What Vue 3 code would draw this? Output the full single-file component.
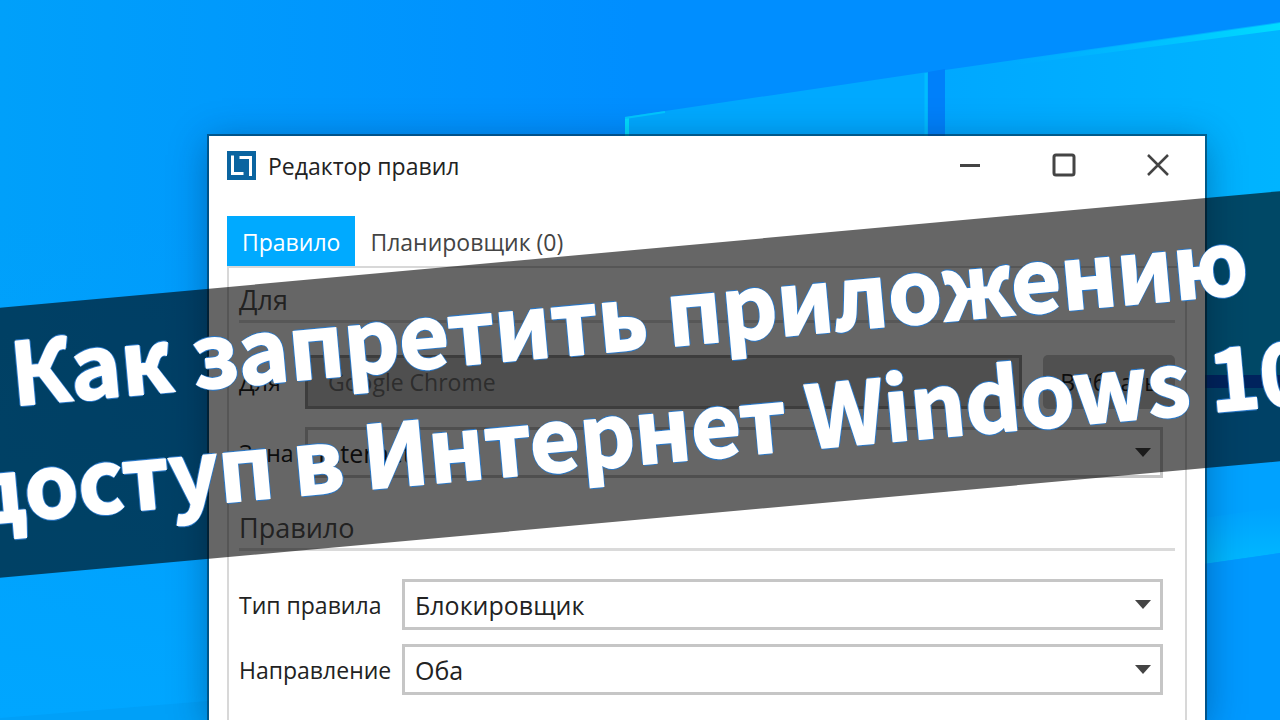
<script setup>
import { ref } from 'vue'

const target = ref('Google Chrome')
const zone = ref('Internet')
const kind = ref('Блокировщик')
const direction = ref('Оба')
</script>

<template>
  <main class="desktop">
    <svg class="wallpaper" viewBox="0 0 1280 720" preserveAspectRatio="none" aria-hidden="true">
      <defs>
        <linearGradient id="sky" x1="0" y1="0" x2="1" y2="0">
          <stop offset="0" stop-color="#00a0fa" />
          <stop offset="0.25" stop-color="#0097fd" />
          <stop offset="0.5" stop-color="#008eff" />
          <stop offset="1" stop-color="#008eff" />
        </linearGradient>
        <linearGradient id="floor" x1="0" y1="0" x2="0" y2="1">
          <stop offset="0.3" stop-color="#00a4ff" stop-opacity="0" />
          <stop offset="1" stop-color="#00a6ff" />
        </linearGradient>
        <linearGradient id="pane" x1="0" y1="0" x2="1" y2="0">
          <stop offset="0" stop-color="#00a8ff" />
          <stop offset="1" stop-color="#00b4ff" />
        </linearGradient>
        <linearGradient id="edge" x1="0" y1="0" x2="1" y2="0">
          <stop offset="0.2" stop-color="#00c0ff" stop-opacity="0" />
          <stop offset="1" stop-color="#00dcff" />
        </linearGradient>
        <linearGradient id="glow" x1="0" y1="0" x2="0" y2="1">
          <stop offset="0" stop-color="#00b8ff" stop-opacity="0" />
          <stop offset="1" stop-color="#00baff" />
        </linearGradient>
      </defs>
      <rect width="1280" height="720" fill="url(#sky)" />
      <rect width="1280" height="720" fill="url(#floor)" />
      <path d="M625 117 928 72V375H625Z" fill="#00a9ff" />
      <path d="M627 140V118" stroke="#00dcff" stroke-width="4" />
      <path d="M625 118 665 112" stroke="#00c8ff" stroke-width="2" />
      <path d="M926 73V140" stroke="#00bcff" stroke-width="3" />
      <path d="M928 72 945 69V375H928Z" fill="#0080fa" />
      <path d="M945 70 1280 22V375H945Z" fill="url(#pane)" />
      <path d="M945 71 1280 23V30L945 74Z" fill="url(#edge)" />
      <path d="M945 375H1280V388H945Z" fill="#0058e8" />
      <path d="M945 388H1280V553L945 600Z" fill="#00a2ff" />
      <path d="M1190 520 1280 507V553L1190 566Z" fill="url(#glow)" />
      <path d="M1190 566 1280 553V720H1190Z" fill="#0099ff" />
      <path d="M0 718 220 700V720H0Z" fill="#00a0f8" />
    </svg>

    <section class="window" aria-labelledby="window-title">
      <header class="titlebar">
        <svg class="logo" viewBox="0 0 29 29" aria-hidden="true">
          <rect width="29" height="29" fill="#0a64a0" />
          <path d="M5.500 4.500V22.500H16.500M12.500 6.500H23.500V25" fill="none" stroke="#fff" stroke-width="3" />
        </svg>
        <h1 id="window-title" class="title">Редактор правил</h1>
        <div class="controls">
          <button type="button" aria-label="Свернуть">
            <svg viewBox="0 0 24 24"><path d="M2 12.500H22" stroke-width="3" /></svg>
          </button>
          <button type="button" aria-label="Развернуть">
            <svg viewBox="0 0 24 24"><rect x="2" y="2" width="20" height="20" rx="2" stroke-width="3" /></svg>
          </button>
          <button type="button" aria-label="Закрыть">
            <svg viewBox="0 0 24 24"><path d="M2 2 22 22M22 2 2 22" stroke-width="2.500" /></svg>
          </button>
        </div>
      </header>

      <div class="tabs" role="tablist">
        <button type="button" role="tab" class="tab active" aria-selected="true">Правило</button>
        <button type="button" role="tab" class="tab" aria-selected="false">Планировщик (0)</button>
      </div>

      <form class="panel" @submit.prevent>
        <h2 class="group">Для</h2>
        <div class="fields source">
          <label for="target">Для</label>
          <input id="target" v-model="target" type="text" readonly />
          <button type="button" class="browse">Выбрать</button>
          <label for="zone">Зона</label>
          <div class="combo wide">
            <select id="zone" v-model="zone"><option>Internet</option></select>
            <svg viewBox="0 0 16 9" aria-hidden="true"><path d="M0 0H16L8 9Z" /></svg>
          </div>
        </div>

        <h2 class="group">Правило</h2>
        <div class="fields rule">
          <label for="kind">Тип правила</label>
          <div class="combo">
            <select id="kind" v-model="kind"><option>Блокировщик</option></select>
            <svg viewBox="0 0 16 9" aria-hidden="true"><path d="M0 0H16L8 9Z" /></svg>
          </div>
          <label for="direction">Направление</label>
          <div class="combo">
            <select id="direction" v-model="direction"><option>Оба</option></select>
            <svg viewBox="0 0 16 9" aria-hidden="true"><path d="M0 0H16L8 9Z" /></svg>
          </div>
        </div>
      </form>
    </section>

    <div class="banner">
      <p class="headline">Как запретить приложению<br />доступ в Интернет Windows 10</p>
    </div>
  </main>
</template>

<style>
body {
  margin: 0;
}
</style>

<style scoped>
.desktop {
  position: relative;
  box-sizing: border-box;
  height: 100vh;
  overflow: hidden;
  padding: 136px 75px 0 209px;
  background: #0096ff;
  color: #222;
  font-family: "Open Sans", "Noto Sans", sans-serif;
  font-size: 23px;
}
.desktop * {
  box-sizing: border-box;
}
.wallpaper {
  position: absolute;
  inset: 0;
  width: 100%;
  height: 100%;
}
.window {
  position: relative;
  display: flex;
  flex-direction: column;
  min-height: 100%;
  padding: 0 18px;
  background: #fff;
  box-shadow: 0 0 0 2px rgba(0, 50, 80, 0.6), 0 6px 36px rgba(0, 30, 70, 0.4);
}
button,
input,
select {
  font: inherit;
  color: inherit;
}
.titlebar {
  display: flex;
  align-items: center;
  gap: 12px;
  height: 58px;
}
.logo {
  width: 29px;
  height: 29px;
}
.title {
  flex: 1;
  margin: 0;
  padding-top: 2px;
  font-size: 23px;
  font-weight: 400;
}
.controls {
  display: flex;
  gap: 70px;
  padding-right: 17px;
}
.controls button {
  display: flex;
  padding: 0;
  border: 0;
  background: none;
}
.controls svg {
  width: 24px;
  height: 24px;
  fill: none;
  stroke: #444;
}
.tabs {
  display: flex;
  margin-top: 22px;
}
.tab {
  height: 50px;
  padding: 2px 15px 0;
  border: 0;
  background: none;
  color: #444;
}
.tab.active {
  background: #00aaff;
  color: #fff;
}
.panel {
  flex: 1;
  padding: 14px 10px 26px;
  border: 2px solid #d8d8d8;
  border-bottom: 0;
}
.group {
  margin: 0;
  padding-bottom: 2px;
  border-bottom: 3px solid #dadada;
  color: #555;
  font-size: 27px;
  font-weight: 400;
  line-height: 36px;
}
.fields {
  display: grid;
  align-items: center;
}
.source {
  grid-template-columns: 66px 1fr 132px;
  row-gap: 18px;
  padding: 32px 0;
}
.rule {
  grid-template-columns: 163px 1fr;
  row-gap: 14px;
  padding: 28px 12px 0 0;
}
input {
  height: 54px;
  padding: 0 20px;
  border: 3px solid #9a9a9a;
  border-radius: 0;
  background: #c6c6c6;
  color: #707070;
}
.browse {
  height: 54px;
  padding: 0;
  border: 0;
  border-radius: 5px;
  background: #c8c8c8;
  color: #222;
}
.source input {
  width: calc(100% - 21px);
}
.combo {
  position: relative;
}
.wide {
  grid-column: 2 / 4;
  margin-right: 12px;
}
select {
  display: block;
  width: 100%;
  height: 51px;
  padding: 0 40px 0 10px;
  border: 3px solid #c6c6c6;
  border-radius: 0;
  background: #fff;
  appearance: none;
  font-size: 25px;
}
.combo svg {
  position: absolute;
  top: 21px;
  right: 12px;
  width: 16px;
  height: 9px;
  fill: #444;
}
.banner {
  position: absolute;
  top: 250px;
  left: -10%;
  display: flex;
  align-items: center;
  justify-content: center;
  width: 120%;
  height: 269px;
  padding: 0 10px 32px 0;
  background: rgba(0, 0, 0, 0.6);
  transform: rotate(-5.2deg);
}
.headline {
  margin: 0;
  color: #fff;
  font-family: "Noto Sans CJK SC", "Open Sans", sans-serif;
  font-size: 86px;
  font-weight: 700;
  line-height: 115px;
  text-align: center;
  white-space: nowrap;
  -webkit-text-stroke: 2px #fff;
  text-shadow: 2px 0 #2a78c8, -2px 0 #2a78c8, 0 2px #2a78c8, 0 -2px #2a78c8;
}
</style>
